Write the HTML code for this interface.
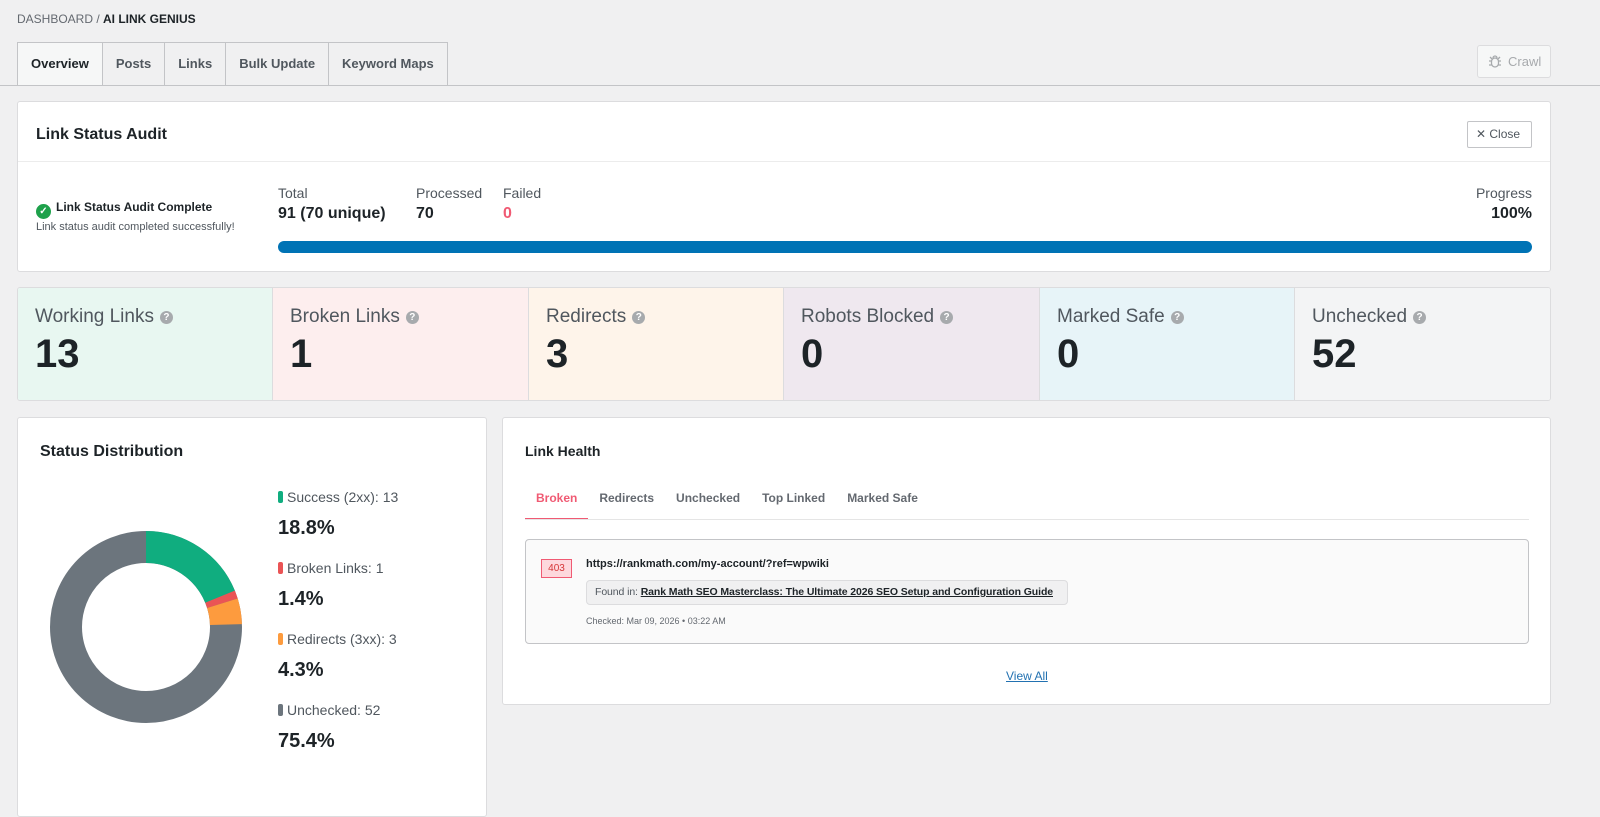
<!DOCTYPE html>
<html><head><meta charset="utf-8"><style>
*{box-sizing:border-box;margin:0;padding:0}
body{width:1600px;height:794px;overflow:hidden;background:#f0f0f1;font-family:"Liberation Sans",sans-serif;color:#1d2327;position:relative}
.abs{position:absolute}
.crumb{left:17px;top:12px;font-size:12px;color:#646970}
.crumb b{color:#1d2327}
.tabs{left:17px;top:42px;display:flex}
.tab{height:44px;border:1px solid #c3c4c7;border-left:none;background:#f0f0f1;font-size:13px;font-weight:bold;color:#50575e;padding:0 13px;line-height:42px}
.tab:first-child{border-left:1px solid #c3c4c7;background:#f6f7f7;color:#1d2327;border-bottom-color:#f6f7f7}
.hr{left:0;top:85px;width:1600px;height:1px;background:#c3c4c7}
.crawl{left:1477px;top:45px;width:74px;height:33px;border:1px solid #dcdcde;border-radius:3px;background:#f6f7f7;color:#a7aaad;font-size:13px;line-height:31px;padding-left:30px}
.card{background:#fff;border:1px solid #dcdcde;border-radius:3px}
.stat{position:absolute;top:0;height:112px;border-right:1px solid #dcdcde;padding:18px 17px}
.stat .l{font-size:19px;color:#50575e}
.q{display:inline-block;width:13px;height:13px;border-radius:50%;background:#a7aaad;color:#fff;font-size:10px;font-weight:bold;text-align:center;line-height:13px;vertical-align:2px;margin-left:6px}
.stat .n{font-size:40px;font-weight:bold;color:#1d2327;margin-top:4px}
.leg{font-size:14px;color:#50575e}
.dot{display:inline-block;width:5px;height:12px;border-radius:2px;margin-right:4px;vertical-align:-1px}
.pct{font-size:20px;font-weight:bold;color:#1d2327}
</style></head><body>
<div class="abs crumb">DASHBOARD / <b>AI LINK GENIUS</b></div>
<div class="abs tabs"><div class="tab">Overview</div><div class="tab">Posts</div><div class="tab">Links</div><div class="tab">Bulk Update</div><div class="tab">Keyword Maps</div></div>
<div class="abs hr"></div>
<div class="abs crawl"><svg class="abs" style="left:10px;top:8px" width="14" height="15" viewBox="0 0 14 15" fill="none" stroke="#a7aaad" stroke-width="1.3"><rect x="3.5" y="4" width="7" height="9" rx="3.5"/><path d="M5 4a2 2 0 0 1 4 0M1 7h2.5M10.5 7H13M1 11h2.5M10.5 11H13M2 3l2 2M12 3l-2 2"/></svg>Crawl</div>

<div class="abs card" style="left:17px;top:101px;width:1534px;height:171px">
  <div class="abs" style="left:18px;top:24px;font-size:16px;font-weight:bold">Link Status Audit</div>
  <div class="abs" style="left:1449px;top:19px;width:65px;height:27px;border:1px solid #c3c4c7;border-radius:2px;font-size:12px;color:#50575e;line-height:25px;padding-left:8px">✕ Close</div>
  <div class="abs" style="left:0;top:59px;width:1532px;height:1px;background:#ececec"></div>
  <div class="abs" style="left:18px;top:98px;font-size:12px;font-weight:bold"><span style="display:inline-block;width:15px;height:15px;border-radius:50%;background:#1ea14b;color:#fff;font-size:10px;text-align:center;line-height:15px;margin-right:5px;vertical-align:-3px">✓</span>Link Status Audit Complete</div>
  <div class="abs" style="left:18px;top:119px;font-size:11px;color:#50575e">Link status audit completed successfully!</div>
  <div class="abs" style="left:260px;top:83px;font-size:14px;color:#50575e">Total</div>
  <div class="abs" style="left:260px;top:103px;font-size:16px;font-weight:bold">91 (70 unique)</div>
  <div class="abs" style="left:398px;top:83px;font-size:14px;color:#50575e">Processed</div>
  <div class="abs" style="left:398px;top:103px;font-size:16px;font-weight:bold">70</div>
  <div class="abs" style="left:485px;top:83px;font-size:14px;color:#50575e">Failed</div>
  <div class="abs" style="left:485px;top:103px;font-size:16px;font-weight:bold;color:#f05a73">0</div>
  <div class="abs" style="right:18px;top:83px;font-size:14px;color:#50575e">Progress</div>
  <div class="abs" style="right:18px;top:103px;font-size:16px;font-weight:bold">100%</div>
  <div class="abs" style="left:260px;top:139px;width:1254px;height:12px;border-radius:6px;background:#0073b5"></div>
</div>

<div class="abs card" style="left:17px;top:287px;width:1534px;height:114px;overflow:hidden">
  <div class="stat" style="left:0;width:255px;background:#e8f7f1"><div class="l">Working Links<span class="q">?</span></div><div class="n">13</div></div>
  <div class="stat" style="left:255px;width:256px;background:#fdeeee"><div class="l">Broken Links<span class="q">?</span></div><div class="n">1</div></div>
  <div class="stat" style="left:511px;width:255px;background:#fef4ea"><div class="l">Redirects<span class="q">?</span></div><div class="n">3</div></div>
  <div class="stat" style="left:766px;width:256px;background:#efe8ef"><div class="l">Robots Blocked<span class="q">?</span></div><div class="n">0</div></div>
  <div class="stat" style="left:1022px;width:255px;background:#e7f4f8"><div class="l">Marked Safe<span class="q">?</span></div><div class="n">0</div></div>
  <div class="stat" style="left:1277px;width:257px;background:#f3f4f5;border-right:none"><div class="l">Unchecked<span class="q">?</span></div><div class="n">52</div></div>
</div>

<div class="abs card" style="left:17px;top:417px;width:470px;height:400px">
  <div class="abs" style="left:22px;top:25px;font-size:16px;font-weight:bold">Status Distribution</div>
  <svg class="abs" style="left:32px;top:113px" width="192" height="192" viewBox="0 0 192 192">
    <g transform="rotate(-90 96 96)" fill="none" stroke-width="32">
      <circle cx="96" cy="96" r="80" stroke="#6c757d" stroke-dasharray="502.65 502.65"/>
      <circle cx="96" cy="96" r="80" stroke="#10ad7f" stroke-dasharray="94.5 502.65"/>
      <circle cx="96" cy="96" r="80" stroke="#ea5455" stroke-dasharray="7.04 502.65" stroke-dashoffset="-94.5"/>
      <circle cx="96" cy="96" r="80" stroke="#fd9b3e" stroke-dasharray="21.6 502.65" stroke-dashoffset="-101.54"/>
    </g>
  </svg>
  <div class="abs" style="left:260px;top:71px">
    <div class="leg"><span class="dot" style="background:#10ad7f"></span>Success (2xx): 13</div>
    <div class="pct" style="margin-top:12px">18.8%</div>
    <div class="leg" style="margin-top:20px"><span class="dot" style="background:#ea5455"></span>Broken Links: 1</div>
    <div class="pct" style="margin-top:12px">1.4%</div>
    <div class="leg" style="margin-top:20px"><span class="dot" style="background:#fd9b3e"></span>Redirects (3xx): 3</div>
    <div class="pct" style="margin-top:12px">4.3%</div>
    <div class="leg" style="margin-top:20px"><span class="dot" style="background:#6c757d"></span>Unchecked: 52</div>
    <div class="pct" style="margin-top:12px">75.4%</div>
  </div>
</div>

<div class="abs card" style="left:502px;top:417px;width:1049px;height:288px">
  <div class="abs" style="left:22px;top:25px;font-size:14px;font-weight:bold">Link Health</div>
  <div class="abs" style="left:22px;top:73px;font-size:12px;font-weight:bold;color:#646970;display:flex">
    <span style="color:#f05a73;padding:0 11px 0 11px;border-bottom:2px solid #f05a73;height:29px">Broken</span>
    <span style="padding:0 11px">Redirects</span><span style="padding:0 11px">Unchecked</span><span style="padding:0 11px">Top Linked</span><span style="padding:0 11px">Marked Safe</span>
  </div>
  <div class="abs" style="left:22px;top:101px;width:1004px;height:1px;background:#e5e5e5"></div>
  <div class="abs" style="left:22px;top:121px;width:1004px;height:105px;border:1px solid #c3c4c7;border-radius:4px;background:#fafafa">
    <div class="abs" style="left:15px;top:19px;width:31px;height:19px;border:1px solid #f05a73;background:#fdd8dd;color:#d63638;font-size:10px;text-align:center;line-height:17px">403</div>
    <div class="abs" style="left:60px;top:18px;font-size:11px;font-weight:bold">https://rankmath.com/my-account/?ref=wpwiki</div>
    <div class="abs" style="left:60px;top:40px;height:25px;width:482px;white-space:nowrap;overflow:hidden;border:1px solid #dcdcde;border-radius:4px;background:#f0f0f1;font-size:10.5px;color:#50575e;line-height:23px;padding-left:8px;letter-spacing:-0.1px">Found in: <b style="color:#1d2327;text-decoration:underline">Rank Math SEO Masterclass: The Ultimate 2026 SEO Setup and Configuration Guide</b></div>
    <div class="abs" style="left:60px;top:76px;font-size:9px;color:#646970">Checked: Mar 09, 2026 • 03:22 AM</div>
  </div>
  <div class="abs" style="left:503px;top:251px;font-size:12px;color:#2271b1;text-decoration:underline">View All</div>
</div>
</body></html>
